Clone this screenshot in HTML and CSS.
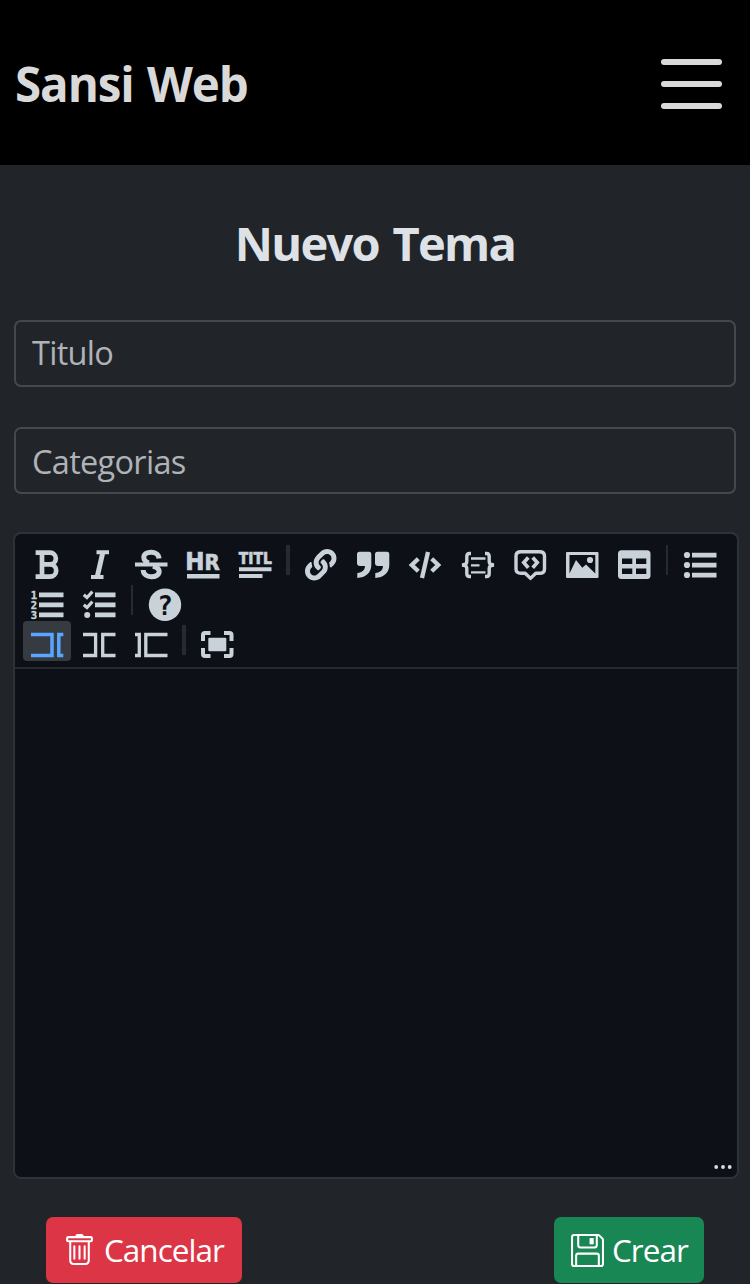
FILE: index.html
```
<!DOCTYPE html>
<html lang="es">
<head>
<meta charset="utf-8">
<title>Sansi Web</title>
<link rel="stylesheet" href="styles.css">
</head>
<body>
<header class="navbar">
  <span class="brand">Sansi Web</span>
  <button class="menu" aria-label="Menu"><span class="menu-bar"></span><span class="menu-bar"></span><span class="menu-bar"></span></button>
</header>
<main class="page">
  <h1 class="title">Nuevo Tema</h1>
  <input class="field" type="text" placeholder="Titulo">
  <input class="field field-categories" type="text" placeholder="Categorias">
  <section class="editor">
    <div class="toolbar">
      <div class="row">
        <button class="tool"><svg class="icon" viewBox="0 0 32 32"><path class="line" stroke-width="4.700" d="M4.600 3.600H19a5.600 5.600 0 0 1 0 11.700H11M19 15.300a6.200 6.200 0 0 1 0 12.400H4.600M11 3.500V28"/></svg></button>
        <button class="tool"><svg class="icon" viewBox="0 0 32 32"><path class="line" stroke-width="4" d="M13.500 3.300H26M8 28H20.500"/><path class="line" stroke-width="5" d="M19.800 3.500L14.200 28"/></svg></button>
        <button class="tool"><svg class="icon" viewBox="0 0 32 32"><path class="line" stroke-width="5" d="M24 9.500C23.500 1.200 8.800 1.500 8.800 8.300c0 3 2 4.600 5 5.700M18 17c4 1.300 6.200 2.800 6.200 5.500 0 7-16 7.500-16-1.500"/><path d="M0 13.600h32.500v4H0z"/></svg></button>
        <button class="tool"><svg class="icon" viewBox="0 0 32 32"><text class="glyph" x="-1.800" y="20.700" font-size="24.500" textLength="34.500" lengthAdjust="spacingAndGlyphs">H<tspan font-size="21">R</tspan></text><path d="M0 25h32.500v4.500H0z"/></svg></button>
        <button class="tool"><svg class="icon" viewBox="0 0 32 32"><text class="glyph" x="-.2" y="15.300" font-size="15.600" textLength="33" lengthAdjust="spacingAndGlyphs">TITL</text><path d="M0 18.300h32.500v4H0zM0 25h23.500v4H0z"/></svg></button>
        <span class="divider divider-wide"></span>
        <button class="tool"><svg class="icon" viewBox="0 0 32 32"><path transform="scale(.0615)" d="M326.612 185.391c59.747 59.809 58.927 155.698.36 214.59-.11.12-.24.25-.36.37l-67.200 67.200c-59.270 59.270-155.699 59.262-214.960 0-59.270-59.260-59.270-155.700 0-214.960l37.106-37.106c9.840-9.840 26.786-3.300 27.294 10.606.648 17.722 3.826 35.527 9.690 52.721 1.986 5.822.567 12.262-3.783 16.612l-13.087 13.087c-28.026 28.026-28.905 73.660-1.155 101.960 28.024 28.579 74.086 28.749 102.325.51l67.200-67.190c28.191-28.191 28.073-73.757 0-101.830-3.701-3.694-7.429-6.564-10.341-8.569a16.037 16.037 0 0 1-6.947-12.606c-.396-10.567 3.348-21.456 11.698-29.806l21.054-21.055c5.521-5.521 14.182-6.199 20.584-1.731a152.482 152.482 0 0 1 20.522 17.197zM467.547 44.449c-59.261-59.262-155.690-59.270-214.960 0l-67.200 67.200c-.12.12-.25.25-.36.37-58.566 58.892-59.387 154.781.36 214.590a152.454 152.454 0 0 0 20.521 17.196c6.402 4.468 15.064 3.789 20.584-1.731l21.054-21.055c8.350-8.350 12.094-19.239 11.698-29.806a16.037 16.037 0 0 0-6.947-12.606c-2.912-2.005-6.640-4.875-10.341-8.569-28.073-28.073-28.191-73.639 0-101.830l67.200-67.190c28.239-28.239 74.300-28.069 102.325.51 27.750 28.300 26.872 73.934-1.155 101.960l-13.087 13.087c-4.350 4.350-5.769 10.790-3.783 16.612 5.864 17.194 9.042 34.999 9.690 52.721.509 13.906 17.454 20.446 27.294 10.606l37.106-37.106c59.271-59.259 59.271-155.699.001-214.959z"/></svg></button>
        <button class="tool"><svg class="icon" viewBox="0 0 32 32"><path d="M2.500 2.700H12Q14.300 2.700 14.300 5V16C14.300 24 8.500 28.700 .3 28.900V24C5.500 23.300 8 20.800 8 17H3Q0 17 0 14V5.200Q0 2.700 2.500 2.700zM20.500 2.700H30Q32.300 2.700 32.300 5V16C32.300 24 26.500 28.700 18.300 28.900V24C23.500 23.300 26 20.800 26 17H21Q18 17 18 14V5.200Q18 2.700 20.500 2.700z"/></svg></button>
        <button class="tool"><svg class="icon" viewBox="0 0 32 32"><path class="line" stroke-width="4.300" d="M9.300 9.800L2.800 16l6.500 6.200M22.700 9.800l6.500 6.200-6.500 6.200"/><path class="line" stroke-width="4.300" d="M19 3L13 29"/></svg></button>
        <button class="tool"><svg class="icon" viewBox="0 0 32 32"><path class="line" stroke-width="3.400" d="M9 4.500H7.500Q4.800 4.500 4.800 7.500v5Q4.800 15.700 0 16q4.800.3 4.800 3.500v5q0 3 2.700 3H9M23 4.500h1.500q2.700 0 2.700 3v5q0 3.200 4.800 3.500-4.800.3-4.800 3.500v5q0 3-2.700 3H23"/><path class="line" stroke-width="2.300" d="M9 9.500h14.500M9 16.300h8.500M9 23.300h14.500"/></svg></button>
        <button class="tool"><svg class="icon" viewBox="0 0 32 32"><path class="line" stroke-width="3.400" stroke-linejoin="round" d="M7 2.800h18.500Q30.500 2.800 30.500 7v13q0 4.300-5 4.300h-3.700L16.500 29.400 11.200 24.300H7Q2 24.300 2 20V7Q2 2.800 7 2.800z"/><path class="line" stroke-width="3.700" d="M14.300 8.500L9.800 13.600l4.500 5.100M18.700 8.500l4.500 5.100-4.500 5.100"/></svg></button>
        <button class="tool"><svg class="icon" viewBox="0 0 32 32"><path fill-rule="evenodd" d="M1 3h30.500q1 0 1 1v24q0 1-1 1H1q-1 0-1-1V4q0-1 1-1zm2.500 3v18.500L10 11l6.300 7.800 3.700-3.300 9.300 9V6z"/><circle cx="24" cy="11" r="3.100"/></svg></button>
        <button class="tool"><svg class="icon" viewBox="0 0 32 32"><path fill-rule="evenodd" d="M3.500 1.300h25.500q3.500 0 3.500 3.500v21.700q0 3.500-3.500 3.500H3.500Q0 30 0 26.500V4.800Q0 1.300 3.500 1.300zM4 9.500V15h10.300V9.500zm14 0V15h10.300V9.500zM4 19.500V25h10.300v-5.500zm14 0V25h10.300v-5.500z"/></svg></button>
        <span class="divider"></span>
        <button class="tool"><svg class="icon" viewBox="0 0 32 32"><circle cx="3" cy="6" r="3.100"/><circle cx="3" cy="16" r="3.100"/><circle cx="3" cy="26" r="3.100"/><path d="M8 3.700h24.500v4.800H8zM8 13.700h24.500v4.800H8zM8 23.700h24.500v4.800H8z"/></svg></button>
      </div>
      <div class="row">
        <button class="tool"><svg class="icon" viewBox="0 0 32 32"><text class="digit" x="-.3" y="9.900">1</text><text class="digit" x="-.3" y="19.900">2</text><text class="digit" x="-.3" y="29.900">3</text><path d="M8 3.500h24.500v4.800H8zM8 13.500h24.500v4.800H8zM8 23.500h24.500v4.800H8z"/></svg></button>
        <button class="tool"><svg class="icon" viewBox="0 0 32 32"><path class="line" stroke-width="3.200" d="M.8 5.700l3.200 2.900 5.400-5.900M.8 15.700l3.200 2.900 5.400-5.900"/><circle cx="4.200" cy="26" r="3"/><path d="M12 3.500h20.500v4.800H12zM12 13.500h20.500v4.800H12zM12 23.500h20.500v4.800H12z"/></svg></button>
        <span class="divider"></span>
        <button class="tool"><svg class="icon" viewBox="0 0 32 32"><circle cx="16" cy="15.800" r="16.200"/><text class="question" x="16" y="25.500">?</text></svg></button>
      </div>
      <div class="row">
        <button class="tool tool-active"><svg class="icon" viewBox="0 0 32 32"><path class="line" stroke-width="3.500" d="M0 5.500h21v21H0M32.300 5.500h-4.500v21h4.500"/></svg></button>
        <button class="tool"><svg class="icon" viewBox="0 0 32 32"><path class="line" stroke-width="3.300" d="M0 5.500h12.600v21H0M32.500 5.500H19.700v21h12.800"/></svg></button>
        <button class="tool"><svg class="icon" viewBox="0 0 32 32"><path class="line" stroke-width="3.300" d="M0 5.500h4.300v21H0M32.500 5.500H10.800v21h21.700"/></svg></button>
        <span class="divider divider-wide"></span>
        <button class="tool"><svg class="icon" viewBox="0 0 32 32"><path class="line" stroke-width="4" d="M2 12V6q0-2 2-2h5.500M23 4h5.500q2 0 2 2v6M30.500 19v6q0 2-2 2H23M9.500 27H4q-2 0-2-2v-6"/><rect x="7.300" y="8.700" width="18" height="13.500" rx="1"/></svg></button>
      </div>
    </div>
    <div class="content">
      <svg class="resize" viewBox="0 0 18 4"><circle cx="2.200" cy="2" r="1.900"/><circle cx="9" cy="2" r="1.900"/><circle cx="15.700" cy="2" r="1.900"/></svg>
    </div>
  </section>
  <div class="actions">
    <button class="btn btn-cancel"><svg class="btn-icon" viewBox="0 0 16 16"><path d="M5.500 5.500A.5.5 0 0 1 6 6v6a.5.5 0 0 1-1 0V6a.5.5 0 0 1 .5-.5m2.500 0a.5.5 0 0 1 .5.5v6a.5.5 0 0 1-1 0V6a.5.5 0 0 1 .5-.5m3 .5a.5.5 0 0 0-1 0v6a.5.5 0 0 0 1 0z"/><path d="M14.500 3a1 1 0 0 1-1 1H13v9a2 2 0 0 1-2 2H5a2 2 0 0 1-2-2V4h-.5a1 1 0 0 1-1-1V2a1 1 0 0 1 1-1H6a1 1 0 0 1 1-1h2a1 1 0 0 1 1 1h3.500a1 1 0 0 1 1 1zM4.118 4 4 4.059V13a1 1 0 0 0 1 1h6a1 1 0 0 0 1-1V4.059L11.882 4zM2.500 3h11V2h-11z"/></svg><span class="btn-label">Cancelar</span></button>
    <button class="btn btn-create"><svg class="btn-icon" viewBox="0 0 16 16"><path d="M11 2H9v3h2z"/><path d="M1.500 0h11.586a1.500 1.500 0 0 1 1.060.44l1.415 1.414A1.500 1.500 0 0 1 16 2.914V14.500a1.500 1.500 0 0 1-1.500 1.500h-13A1.500 1.500 0 0 1 0 14.500v-13A1.500 1.500 0 0 1 1.500 0M1 1.500v13a.5.5 0 0 0 .5.5H2v-4.500A1.500 1.500 0 0 1 3.500 9h9a1.500 1.500 0 0 1 1.500 1.500V15h.5a.5.5 0 0 0 .5-.5V2.914a.5.5 0 0 0-.146-.353l-1.415-1.415A.5.5 0 0 0 13.086 1H13v4.500A1.500 1.500 0 0 1 11.500 7h-7A1.500 1.500 0 0 1 3 5.500V1H1.500a.5.5 0 0 0-.5.5m3 4a.5.5 0 0 0 .5.5h7a.5.5 0 0 0 .5-.5V1H4zM3 15h10v-4.500a.5.5 0 0 0-.5-.5h-9a.5.5 0 0 0-.5.5z"/></svg><span class="btn-label">Crear</span></button>
  </div>
</main>
</body>
</html>
```
FILE: styles.css
```
* { box-sizing: border-box; }
html, body { margin: 0; height: 1284px; overflow: hidden; }
body {
  background: #212529;
  color: #dee2e6;
  font-family: "Open Sans", "Noto Sans", sans-serif;
  font-size: 32px;
}
button { margin: 0; padding: 0; border: 0; background: none; font: inherit; color: inherit; }
.navbar {
  display: flex;
  align-items: center;
  justify-content: space-between;
  height: 165px;
  padding: 3px 28px 0 15px;
  background: #000;
}
.brand {
  color: #d9d9d9;
  font-size: 47.5px;
  font-weight: 700;
  line-height: 64px;
  letter-spacing: -1.1px;
  word-spacing: 2px;
}
.menu { display: flex; flex-direction: column; gap: 16px; }
.menu-bar { width: 61px; height: 6px; border-radius: 3px; background: #d9d9d9; }
.page { padding: 46px 14px 0; }
.title {
  margin: 0;
  font-size: 47px;
  font-weight: 700;
  line-height: 64px;
  text-align: center;
  letter-spacing: -1.7px;
  word-spacing: 3px;
}
.field {
  display: block;
  width: 722px;
  height: 67px;
  margin: 45px 0 0;
  padding: 0 16px 2px 16px;
  border: 2px solid #43494f;
  border-radius: 7px;
  outline: 0;
  background: #212529;
  font: inherit;
  font-size: 32.5px;
  color: inherit;
}
.field::placeholder { color: #afb3b7; opacity: 1; letter-spacing: -0.7px; }
.field-categories { margin-top: 40px; padding-top: 2px; padding-bottom: 0; }
.editor {
  display: flex;
  flex-direction: column;
  width: 726px;
  height: 647px;
  margin: 38px 0 0 -1.5px;
  border: 2px solid #2d3238;
  border-radius: 8px;
  background: #0d1117;
  color: #c9d1d9;
}
.toolbar { height: 135px; padding: 7px 0 0 8px; border-bottom: 2px solid #272b31; }
.row { display: flex; gap: 4.1px; height: 40px; }
.tool {
  display: flex;
  align-items: center;
  justify-content: center;
  flex: none;
  width: 48px;
  height: 40px;
  padding: 8px 0 0;
  border-radius: 4px;
}
.tool-active { background: #363b42; color: #58a6ff; }
.icon { flex: none; width: 32px; height: 32px; overflow: visible; fill: currentColor; }
.line { fill: none; stroke: currentColor; }
.glyph { font-family: "DejaVu Sans", sans-serif; font-weight: 700; stroke: currentColor; stroke-width: .7px; }
.digit { font-family: "DejaVu Sans Mono", monospace; font-size: 10.5px; font-weight: 700; stroke: currentColor; stroke-width: .4px; }
.question { font-family: "DejaVu Sans Mono", monospace; font-size: 26px; font-weight: 700; fill: #0d1117; text-anchor: middle; }
.divider { display: flex; flex: none; justify-content: center; width: 10.2px; height: 30px; margin-top: 4px; }
.divider::before { content: ""; width: 2px; background: #272b31; }
.divider-wide::before { width: 4px; }
.content { display: flex; flex: 1; align-items: flex-end; justify-content: flex-end; padding: 0 5px 8px; }
.resize { width: 18px; height: 4px; fill: #d9dee3; }
.actions { display: flex; justify-content: space-between; padding: 38px 32px 0; }
.btn {
  display: flex;
  align-items: center;
  height: 66px;
  border-radius: 7px;
  color: #fff;
  font-size: 31.5px;
  letter-spacing: -1px;
}
.btn-cancel { width: 196px; padding-left: 17px; gap: 8px; background: #dc3545; }
.btn-create { width: 150px; padding-left: 17px; gap: 8px; background: #198754; }
.btn-icon { width: 33px; height: 33px; flex: none; fill: currentColor; }
.btn-label { padding-bottom: 2px; line-height: 43px; }
```
